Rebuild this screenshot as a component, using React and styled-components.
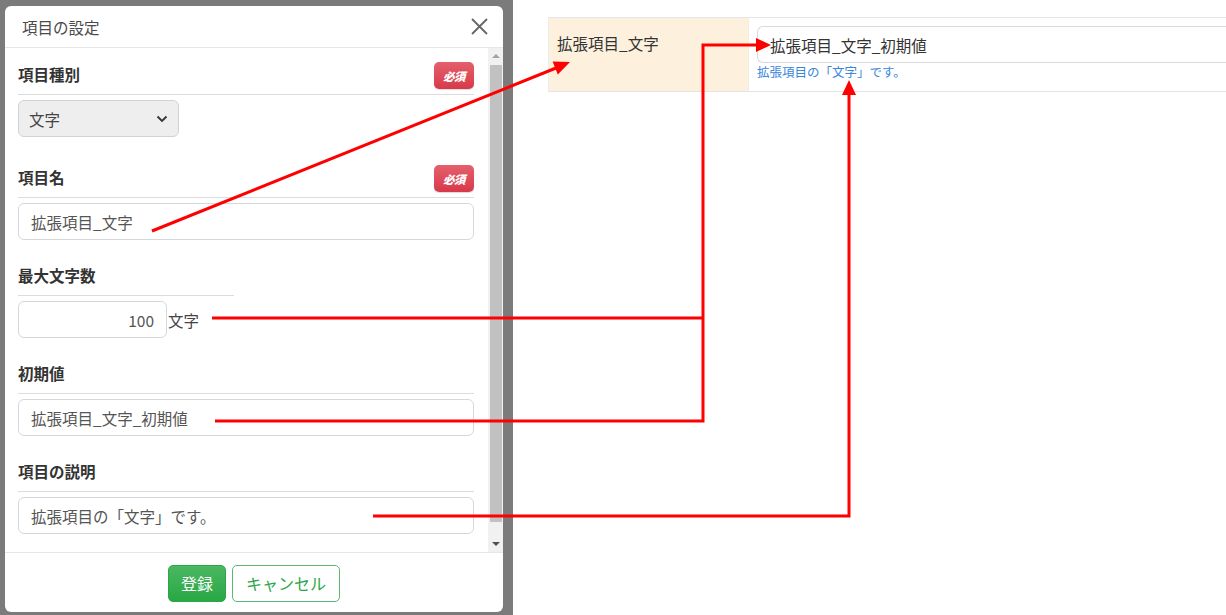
import React from 'react';
import styled, { createGlobalStyle } from 'styled-components';

const GlobalStyle = createGlobalStyle`
  html, body {
    margin: 0;
    padding: 0;
    background: #ffffff;
  }
  body {
    font-family: "Noto Sans CJK JP", "Noto Sans", sans-serif;
    color: #333333;
  }
`;

const Page = styled.div`
  position: relative;
  width: 1226px;
  height: 615px;
  display: flex;
  overflow: hidden;
  background: #ffffff;
`;

const Backdrop = styled.div`
  width: 513px;
  height: 615px;
  flex-shrink: 0;
  background: #7b7b7b;
  box-sizing: border-box;
  padding: 6px 10px 0 5px;
`;

const Modal = styled.div`
  width: 498px;
  height: 606px;
  background: #ffffff;
  border-radius: 6px;
  display: flex;
  flex-direction: column;
  overflow: hidden;
`;

const ModalHeader = styled.div`
  height: 41px;
  flex-shrink: 0;
  display: flex;
  align-items: center;
  justify-content: space-between;
  padding: 0 15px 0 17px;
  border-bottom: 1px solid #e6e6e6;
`;

const Title = styled.div`
  font-size: 15.5px;
  color: #4a4a4a;
`;

const CloseButton = styled.div`
  width: 17px;
  height: 17px;
  display: flex;
`;

const ModalBody = styled.div`
  flex: 1;
  display: flex;
  min-height: 0;
  border-bottom: 1px solid #e6e6e6;
`;

const FormArea = styled.div`
  flex: 1;
  padding: 14px 14px 0 13px;
  display: flex;
  flex-direction: column;
  gap: 23px;
`;

const Section = styled.div`
  display: flex;
  flex-direction: column;
  gap: 5px;
`;

const LabelRow = styled.div`
  height: 27px;
  display: flex;
  align-items: center;
  justify-content: space-between;
  padding-bottom: 5px;
  border-bottom: 1px solid #dcdcdc;
  width: ${(p) => (p.narrow ? '216px' : 'auto')};
`;

const Label = styled.div`
  font-size: 15.5px;
  font-weight: 700;
  color: #333333;
  margin-bottom: 4px;
`;

const RequiredBadge = styled.div`
  width: 40px;
  height: 27px;
  border-radius: 5px;
  background: linear-gradient(#e4606c, #d8394a);
  box-shadow: 0 1px 1px rgba(0, 0, 0, 0.15);
  color: #ffffff;
  font-size: 11.5px;
  font-weight: 900;
  font-style: italic;
  display: flex;
  align-items: center;
  justify-content: center;
  letter-spacing: -0.5px;
`;

const Select = styled.div`
  width: 161px;
  height: 37px;
  box-sizing: border-box;
  border: 1px solid #cfd3d8;
  border-radius: 6px;
  background: #eeeeee;
  display: flex;
  align-items: center;
  justify-content: space-between;
  padding: 0 10px 0 10px;
  font-size: 15.5px;
  color: #444444;
  margin-bottom: 5px;
`;

const TextBox = styled.div`
  height: 37px;
  box-sizing: border-box;
  border: 1px solid #d4d8dd;
  border-radius: 6px;
  background: #ffffff;
  display: flex;
  align-items: center;
  justify-content: ${(p) => (p.align === 'right' ? 'flex-end' : 'flex-start')};
  padding: 0 12px;
  font-size: 15.5px;
  color: #555555;
  width: ${(p) => p.width || 'auto'};
  flex-shrink: 0;
`;

const InlineRow = styled.div`
  display: flex;
  align-items: center;
`;

const Suffix = styled.span`
  font-size: 15.5px;
  color: #444444;
  margin-left: 1px;
`;

const Scrollbar = styled.div`
  width: 15px;
  background: #f1f1f1;
  display: flex;
  flex-direction: column;
  align-items: center;
`;

const ScrollArrow = styled.div`
  height: 16px;
  width: 100%;
  display: flex;
  align-items: center;
  justify-content: center;

  &::before {
    content: '';
    width: 0;
    height: 0;
    border-left: 4px solid transparent;
    border-right: 4px solid transparent;
    ${(p) =>
      p.down
        ? 'border-top: 4px solid #505050;'
        : 'border-bottom: 4px solid #a3a3a3;'}
  }
`;

const ScrollThumb = styled.div`
  width: 12px;
  height: 457px;
  margin-top: 1px;
  background: #c1c1c1;
`;

const ScrollTrack = styled.div`
  flex: 1;
`;

const ModalFooter = styled.div`
  height: 58px;
  flex-shrink: 0;
  display: flex;
  align-items: center;
  justify-content: center;
  gap: 6px;
  padding-top: 1px;
`;

const Button = styled.div`
  height: 37px;
  box-sizing: border-box;
  border-radius: 5px;
  display: flex;
  align-items: center;
  justify-content: center;
  font-size: 16px;
  padding: 0 ${(p) => (p.primary ? '12px' : '13px')};
  border: 1px solid ${(p) => (p.primary ? '#28a745' : '#5cb870')};
  background: ${(p) =>
    p.primary ? 'linear-gradient(#4bb862, #28a745)' : '#ffffff'};
  color: ${(p) => (p.primary ? '#ffffff' : '#28a745')};
`;

const Content = styled.div`
  flex: 1;
  padding: 17px 0 0 35px;
`;

const Table = styled.div`
  display: grid;
  grid-template-columns: 200px 1fr;
  height: 75px;
  box-sizing: border-box;
  border-top: 1px solid #e6e6e6;
  border-bottom: 1px solid #e3e3e3;
  border-left: 1px solid #ececec;
`;

const HeadCell = styled.div`
  background: #fdf0dd;
  padding: 14px 0 0 8px;
  font-size: 15.5px;
  color: #333333;
  border-right: 1px solid #f3ece2;
`;

const ValueCell = styled.div`
  padding: 8px 0 0 8px;
  display: flex;
  flex-direction: column;
`;

const ValueInput = styled.div`
  height: 37px;
  box-sizing: border-box;
  border: 1px solid #d6dae0;
  border-right: none;
  border-radius: 6px 0 0 6px;
  display: flex;
  align-items: center;
  padding-left: 12px;
  font-size: 15.5px;
  color: #333333;
`;

const HelpText = styled.div`
  font-size: 12.5px;
  line-height: 18px;
  color: #3a86dc;
`;

const Annotations = styled.svg`
  position: absolute;
  left: 0;
  top: 0;
  pointer-events: none;
`;

const lines = [
  [[152, 231], [556, 68]],
  [[212, 318], [703, 318]],
  [[215, 421], [703, 421], [703, 45], [757, 45]],
  [[373, 516], [849, 516], [849, 94]],
];

const heads = [
  '570,62 552.6,61.5 557.8,74.5',
  '771,45 756,38 756,52',
  '849,80 842,95 856,95',
];

const Field = ({ label, required, narrow, children }) => (
  <Section>
    <LabelRow narrow={narrow}>
      <Label>{label}</Label>
      {required && <RequiredBadge>必須</RequiredBadge>}
    </LabelRow>
    {children}
  </Section>
);

const App = () => (
  <Page>
    <GlobalStyle />
    <Backdrop>
      <Modal>
        <ModalHeader>
          <Title>項目の設定</Title>
          <CloseButton>
            <svg width="17" height="17" viewBox="0 0 17 17">
              <path d="M1 1 L16 16 M16 1 L1 16" stroke="#666" strokeWidth="1.8" />
            </svg>
          </CloseButton>
        </ModalHeader>
        <ModalBody>
          <FormArea>
            <Field label="項目種別" required>
              <Select>
                <span>文字</span>
                <svg width="12" height="8" viewBox="0 0 12 8">
                  <path d="M1.5 1.5 L6 6 L10.5 1.5" fill="none" stroke="#333" strokeWidth="1.8" />
                </svg>
              </Select>
            </Field>
            <Field label="項目名" required>
              <TextBox>拡張項目_文字</TextBox>
            </Field>
            <Field label="最大文字数" narrow>
              <InlineRow>
                <TextBox width="149px" align="right">100</TextBox>
                <Suffix>文字</Suffix>
              </InlineRow>
            </Field>
            <Field label="初期値">
              <TextBox>拡張項目_文字_初期値</TextBox>
            </Field>
            <Field label="項目の説明">
              <TextBox>拡張項目の「文字」です。</TextBox>
            </Field>
          </FormArea>
          <Scrollbar>
            <ScrollArrow />
            <ScrollThumb />
            <ScrollTrack />
            <ScrollArrow down />
          </Scrollbar>
        </ModalBody>
        <ModalFooter>
          <Button primary>登録</Button>
          <Button>キャンセル</Button>
        </ModalFooter>
      </Modal>
    </Backdrop>
    <Content>
      <Table>
        <HeadCell>拡張項目_文字</HeadCell>
        <ValueCell>
          <ValueInput>拡張項目_文字_初期値</ValueInput>
          <HelpText>拡張項目の「文字」です。</HelpText>
        </ValueCell>
      </Table>
    </Content>
    <Annotations width="1226" height="615" viewBox="0 0 1226 615">
      {lines.map((pts, i) => (
        <polyline
          key={i}
          points={pts.map((p) => p.join(',')).join(' ')}
          fill="none"
          stroke="#ff0000"
          strokeWidth="3"
        />
      ))}
      {heads.map((h, i) => (
        <polygon key={i} points={h} fill="#ff0000" />
      ))}
    </Annotations>
  </Page>
);

export default App;
